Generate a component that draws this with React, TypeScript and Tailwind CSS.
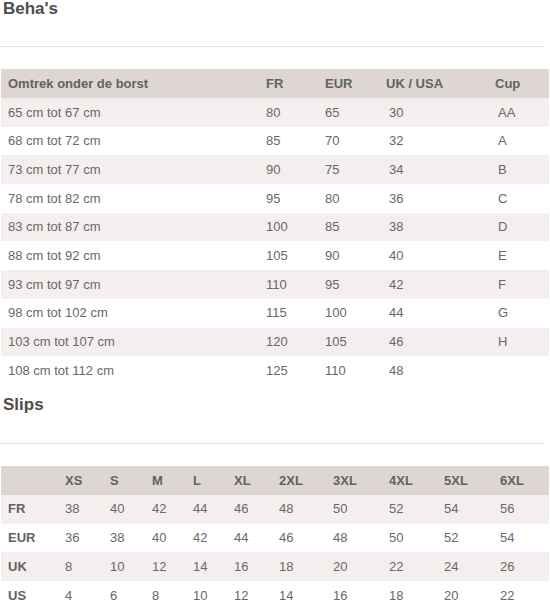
const behaRows = [
  ["65 cm tot 67 cm", "80", "65", "30", "AA"],
  ["68 cm tot 72 cm", "85", "70", "32", "A"],
  ["73 cm tot 77 cm", "90", "75", "34", "B"],
  ["78 cm tot 82 cm", "95", "80", "36", "C"],
  ["83 cm tot 87 cm", "100", "85", "38", "D"],
  ["88 cm tot 92 cm", "105", "90", "40", "E"],
  ["93 cm tot 97 cm", "110", "95", "42", "F"],
  ["98 cm tot 102 cm", "115", "100", "44", "G"],
  ["103 cm tot 107 cm", "120", "105", "46", "H"],
  ["108 cm tot 112 cm", "125", "110", "48", ""],
];

const sizes = ["XS", "S", "M", "L", "XL", "2XL", "3XL", "4XL", "5XL", "6XL"];

const slipRows: [string, string[]][] = [
  ["FR", ["38", "40", "42", "44", "46", "48", "50", "52", "54", "56"]],
  ["EUR", ["36", "38", "40", "42", "44", "46", "48", "50", "52", "54"]],
  ["UK", ["8", "10", "12", "14", "16", "18", "20", "22", "24", "26"]],
  ["US", ["4", "6", "8", "10", "12", "14", "16", "18", "20", "22"]],
];

const behaCols = "grid grid-cols-[258px_59px_61px_109px_1fr] items-center pl-[7px]";
const slipCols =
  "grid grid-cols-[57px_45px_42px_41px_41px_45px_54px_56px_55px_56px_1fr] items-center pl-[7px]";

export default function App() {
  return (
    <div className="w-[550px] h-[602px] overflow-hidden bg-white text-[13px] text-[#686868] font-['Liberation_Sans',Arial,sans-serif]">
      <h2 className="pl-[3px] text-[17px] leading-[17px] font-bold text-[#4d4d4d]">Beha's</h2>
      <div className="mt-[29px] h-px w-[545px] bg-[#e4e4e4]" />

      <div className="mt-[22px] mx-[1px] w-[548px]">
        <div className={`${behaCols} h-[29px] bg-[#ddd6d3] font-bold text-[#626262]`}>
          <span>Omtrek onder de borst</span>
          <span>FR</span>
          <span>EUR</span>
          <span>UK / USA</span>
          <span>Cup</span>
        </div>
        {behaRows.map((r, i) => (
          <div key={r[0]} className={`${behaCols} h-[28.7px] ${i % 2 === 0 ? "bg-[#f4efee]" : "bg-white"}`}>
            <span>{r[0]}</span>
            <span>{r[1]}</span>
            <span>{r[2]}</span>
            <span className="pl-[3px]">{r[3]}</span>
            <span className="pl-[3px]">{r[4]}</span>
          </div>
        ))}
      </div>

      <h2 className="mt-[11px] pl-[3px] text-[17px] leading-[17px] font-bold text-[#4d4d4d]">Slips</h2>
      <div className="mt-[30px] h-px w-[545px] bg-[#e4e4e4]" />

      <div className="mt-[22px] mx-[1px] w-[548px]">
        <div className={`${slipCols} h-[29px] bg-[#ddd6d3] font-bold text-[#626262]`}>
          <span />
          {sizes.map((s) => (
            <span key={s}>{s}</span>
          ))}
        </div>
        {slipRows.map(([label, vals], i) => (
          <div key={label} className={`${slipCols} h-[28.7px] ${i % 2 === 0 ? "bg-[#f4efee]" : "bg-white"}`}>
            <span className="font-bold text-[#626262]">{label}</span>
            {vals.map((v, j) => (
              <span key={j}>{v}</span>
            ))}
          </div>
        ))}
      </div>
    </div>
  );
}
